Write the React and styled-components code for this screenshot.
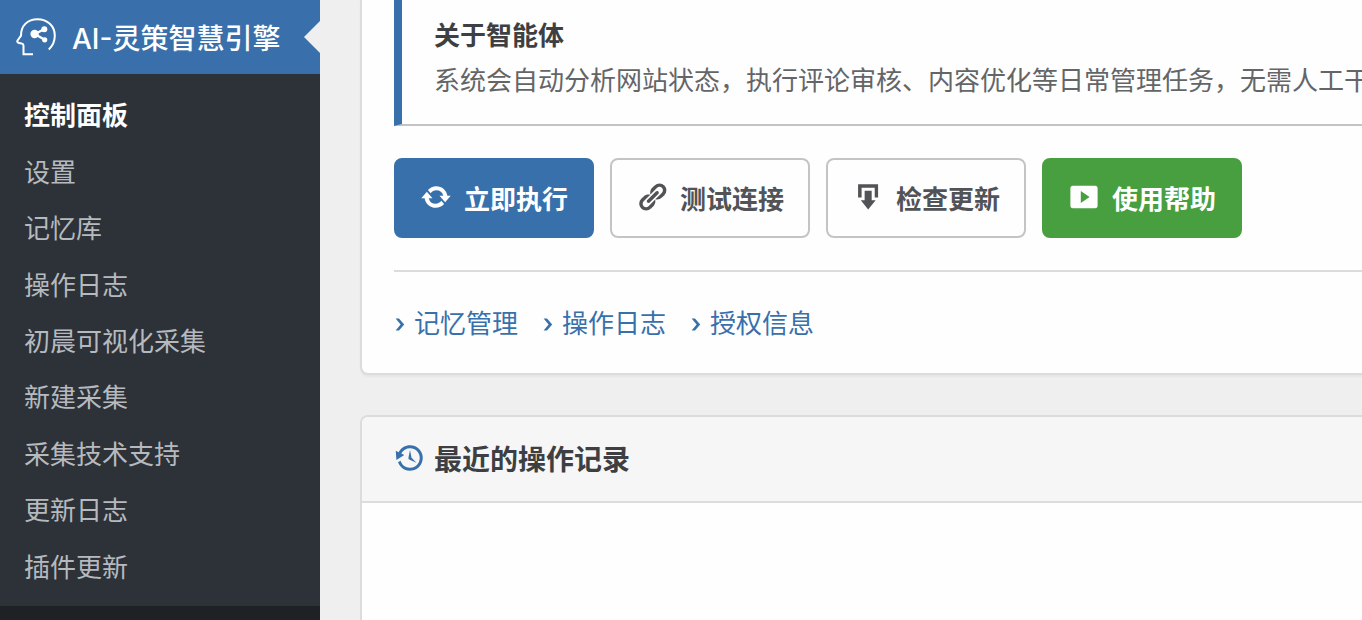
import styled, { createGlobalStyle } from 'styled-components';

const menuItems = [
  '控制面板',
  '设置',
  '记忆库',
  '操作日志',
  '初晨可视化采集',
  '新建采集',
  '采集技术支持',
  '更新日志',
  '插件更新',
];

const quickLinks = ['记忆管理', '操作日志', '授权信息'];

const LogoIcon = () => (
  <svg width="40" height="38" viewBox="0 0 40 38" fill="none" stroke="currentColor" strokeWidth="2" aria-hidden="true">
    <path d="M17 36.200H7.500V27.600Q7.500 26 5.600 25.600L3 25C1.200 24.600 .8 23.400 1.800 22.200L5 17.600C5 7.600 11.600 1.200 21.400 1.200C31.400 1.200 38.800 8 38.800 17.600C38.800 23.600 36.400 28.200 32.800 31.400" />
    <path d="M18.700 16L28.300 11.200M18.700 16L28.700 21.800" strokeWidth="2.400" />
    <circle cx="18.600" cy="16" r="4.200" fill="currentColor" stroke="none" />
    <circle cx="28.300" cy="11.200" r="3" fill="currentColor" stroke="none" />
    <circle cx="28.700" cy="21.800" r="2.600" fill="currentColor" stroke="none" />
  </svg>
);

const Icon = ({ children }) => (
  <svg width="32" height="32" viewBox="0 0 20 20" fill="currentColor" aria-hidden="true">
    {children}
  </svg>
);

const UpdateIcon = () => (
  <Icon>
    <path d="M10.2 3.28c3.53 0 6.43 2.61 6.92 6h2.08l-3.5 4-3.5-4h2.32a4.439 4.439 0 0 0-4.32-3.45c-1.45 0-2.73.71-3.54 1.78L4.95 5.66a6.965 6.965 0 0 1 5.25-2.38zm-.4 13.44c-3.52 0-6.43-2.61-6.92-6H.8l3.5-4c1.17 1.33 2.33 2.67 3.5 4H5.48a4.439 4.439 0 0 0 4.32 3.45c1.45 0 2.73-.71 3.54-1.78l1.71 1.95a6.95 6.95 0 0 1-5.25 2.38z" />
  </Icon>
);

const LinkIcon = () => (
  <Icon>
    <path d="M17.74 2.76a4.321 4.321 0 0 1 0 6.1l-1.53 1.52c-1.12 1.12-2.7 1.47-4.14 1.09l2.62-2.61.76-.77.76-.76c.84-.84.84-2.2 0-3.04a2.13 2.13 0 0 0-3.04 0l-.77.76-3.38 3.38c-.37-1.44-.02-3.02 1.1-4.14l1.52-1.53a4.321 4.321 0 0 1 6.1 0zM8.59 13.43l5.34-5.34c.42-.42.42-1.1 0-1.52-.44-.43-1.13-.39-1.53 0l-5.33 5.34c-.42.42-.42 1.1 0 1.52.44.43 1.13.39 1.52 0zm-.76 2.29l4.14-4.15c.38 1.44.03 3.02-1.09 4.14l-1.52 1.53a4.321 4.321 0 0 1-6.1 0 4.321 4.321 0 0 1 0-6.1l1.53-1.52c1.12-1.12 2.7-1.47 4.14-1.1l-4.14 4.15c-.85.84-.85 2.2 0 3.05.84.84 2.2.84 3.04 0z" />
  </Icon>
);

const DownloadIcon = () => (
  <Icon>
    <path d="M3.8 2.1h12.5v8.2h-2.1V4.200H6v6.100H3.800zM7.900 6.100h4.400v6h2.500L10.100 17.800 5.500 12.100h2.400z" />
  </Icon>
);

const VideoIcon = () => (
  <Icon>
    <path fillRule="evenodd" d="M3 3h14c.94 0 1.500.560 1.500 1.500v11c0 .94-.560 1.500-1.500 1.500H3c-.94 0-1.500-.560-1.500-1.500v-11C1.500 3.560 2.060 3 3 3zm5 3.300v7.400L13.500 10z" />
  </Icon>
);

const HistoryIcon = () => (
  <Icon>
    <path d="M13.65 2.88c3.93 2.01 5.48 6.84 3.47 10.77s-6.83 5.48-10.77 3.47c-1.87-.96-3.2-2.56-3.86-4.4l1.64-1.03c.45 1.57 1.52 2.95 3.08 3.76 3.01 1.54 6.69.35 8.23-2.66 1.55-3.01.36-6.69-2.65-8.24C9.78 3.01 6.1 4.2 4.56 7.21l1.88.97-4.95 3.08-.39-5.82 1.78.91C4.9 2.4 9.75.89 13.65 2.88zm-4.36 7.83C9.11 10.53 9 10.28 9 10c0-.07.03-.12.04-.19h-.01L10 5l.97 4.81L14 13l-4.5-2.12.02-.02c-.08-.04-.16-.09-.23-.15z" />
  </Icon>
);

const ChevronIcon = () => (
  <svg width="12" height="14" viewBox="0 0 12 14" fill="currentColor" aria-hidden="true">
    <path d="M1.600 1.600H5L10.200 7.600L5 13.600H1.600L6.600 7.600z" />
  </svg>
);

const App = () => {
  return (
    <>
      <GlobalStyle />
      <StyledPage>
        <StyledSidebar>
          <StyledBrand href="#dashboard">
            <LogoIcon />
            <span>AI-灵策智慧引擎</span>
          </StyledBrand>
          <StyledMenu>
            {menuItems.map((item, index) => (
              <li key={item}>
                <StyledMenuLink href={`#menu-${index}`} $current={index === 0}>{item}</StyledMenuLink>
              </li>
            ))}
          </StyledMenu>
        </StyledSidebar>
        <StyledMain>
          <StyledAgentCard>
            <StyledNotice>
              <h3>关于智能体</h3>
              <p>系统会自动分析网站状态，执行评论审核、内容优化等日常管理任务，无需人工干预</p>
            </StyledNotice>
            <StyledActions>
              <StyledButton type="button" $color="#fff" $bg="#3870ac" $border="#3870ac"><UpdateIcon />立即执行</StyledButton>
              <StyledButton type="button"><LinkIcon />测试连接</StyledButton>
              <StyledButton type="button"><DownloadIcon />检查更新</StyledButton>
              <StyledButton type="button" $color="#fff" $bg="#489f3f" $border="#489f3f"><VideoIcon />使用帮助</StyledButton>
            </StyledActions>
            <StyledLinks>
              {quickLinks.map((link, index) => (
                <a key={link} href={`#link-${index}`}><ChevronIcon />{link}</a>
              ))}
            </StyledLinks>
          </StyledAgentCard>
          <StyledHistoryCard>
            <header>
              <HistoryIcon />
              <h2>最近的操作记录</h2>
            </header>
          </StyledHistoryCard>
        </StyledMain>
      </StyledPage>
    </>
  );
}

const GlobalStyle = createGlobalStyle`
  * {
    box-sizing: border-box;
  }
  body {
    margin: 0;
    background: #efefef;
    font-family: Inter, "Noto Sans CJK SC", sans-serif;
    font-size: 26px;
    color: #3d3f43;
  }
  h2, h3, p, ul {
    margin: 0;
    padding: 0;
  }
  a {
    text-decoration: none;
  }
  svg {
    flex-shrink: 0;
  }
`;

const StyledPage = styled.div`
  display: flex;
  min-height: 100vh;
`;

const StyledSidebar = styled.nav`
  flex: 0 0 320px;
  background: #1f2224;
`;

const StyledBrand = styled.a`
  position: relative;
  display: flex;
  align-items: center;
  gap: 16px;
  height: 74px;
  padding: 0 16px;
  background: #3970ac;
  color: #fff;
  font-size: 28px;
  font-weight: 500;
  white-space: nowrap;
  /* notch pointing at the open section */
  &::after {
    content: "";
    position: absolute;
    right: 0;
    top: 21px;
    border: 16px solid transparent;
    border-left-width: 0;
    border-right-color: #efefef;
  }
`;

const StyledMenu = styled.ul`
  display: flex;
  flex-direction: column;
  min-height: 532px;
  padding: 14px 0 10px;
  background: #2d3238;
  list-style: none;
  li {
    display: flex;
    flex: 1;
  }
`;

const StyledMenuLink = styled.a`
  display: flex;
  flex: 1;
  align-items: center;
  padding: 0 24px;
  line-height: 36px;
  color: ${(props) => (props.$current ? '#fff' : '#b6babf')};
  font-weight: ${(props) => (props.$current ? 700 : 400)};
`;

const StyledMain = styled.main`
  display: flex;
  flex: 1;
  flex-direction: column;
  gap: 40px;
  min-width: 0;
  padding-left: 40px;
`;

const StyledCard = styled.section`
  border: 2px solid #dcdcdc;
  border-right: 0;
  background: #fefefe;
`;

const StyledAgentCard = styled(StyledCard)`
  padding: 0 0 30px 32px;
  border-top: 0;
  border-radius: 0 0 0 8px;
  box-shadow: 0 2px 2px rgba(0, 0, 0, 0.04);
`;

const StyledNotice = styled.div`
  overflow: hidden;
  padding: 14px 0 20px 32px;
  border-left: 8px solid #3870ac;
  border-bottom: 2px solid #c3c4c5;
  white-space: nowrap;
  h3 {
    font-size: 26px;
    font-weight: 700;
    line-height: 44px;
  }
  p {
    line-height: 46px;
    color: #646567;
  }
`;

const StyledActions = styled.div`
  display: flex;
  flex-wrap: wrap;
  gap: 16px;
  padding: 32px 0;
  border-bottom: 2px solid #dcdcdc;
`;

const StyledButton = styled.button`
  display: flex;
  align-items: center;
  gap: 12px;
  height: 80px;
  padding: 0 24px 2px;
  border: 2px solid ${(props) => props.$border || '#c3c4c5'};
  border-radius: 8px;
  background: ${(props) => props.$bg || '#fefefe'};
  color: ${(props) => props.$color || '#515356'};
  font-family: inherit;
  font-size: 26px;
  font-weight: 600;
  white-space: nowrap;
  cursor: pointer;
`;

const StyledLinks = styled.div`
  display: flex;
  flex-wrap: wrap;
  gap: 24px;
  padding-top: 33px;
  line-height: 38px;
  a {
    display: flex;
    align-items: center;
    gap: 8px;
    color: #3870ac;
  }
`;

const StyledHistoryCard = styled(StyledCard)`
  flex: 1;
  border-bottom: 0;
  border-radius: 8px 0 0 0;
  overflow: hidden;
  header {
    display: flex;
    align-items: center;
    gap: 8px;
    height: 86px;
    padding: 0 32px 2px;
    border-bottom: 2px solid #dcdcdc;
    background: #f6f6f6;
  }
  h2 {
    font-size: 28px;
    font-weight: 600;
  }
  svg {
    color: #3870ac;
  }
`;

export default App;
